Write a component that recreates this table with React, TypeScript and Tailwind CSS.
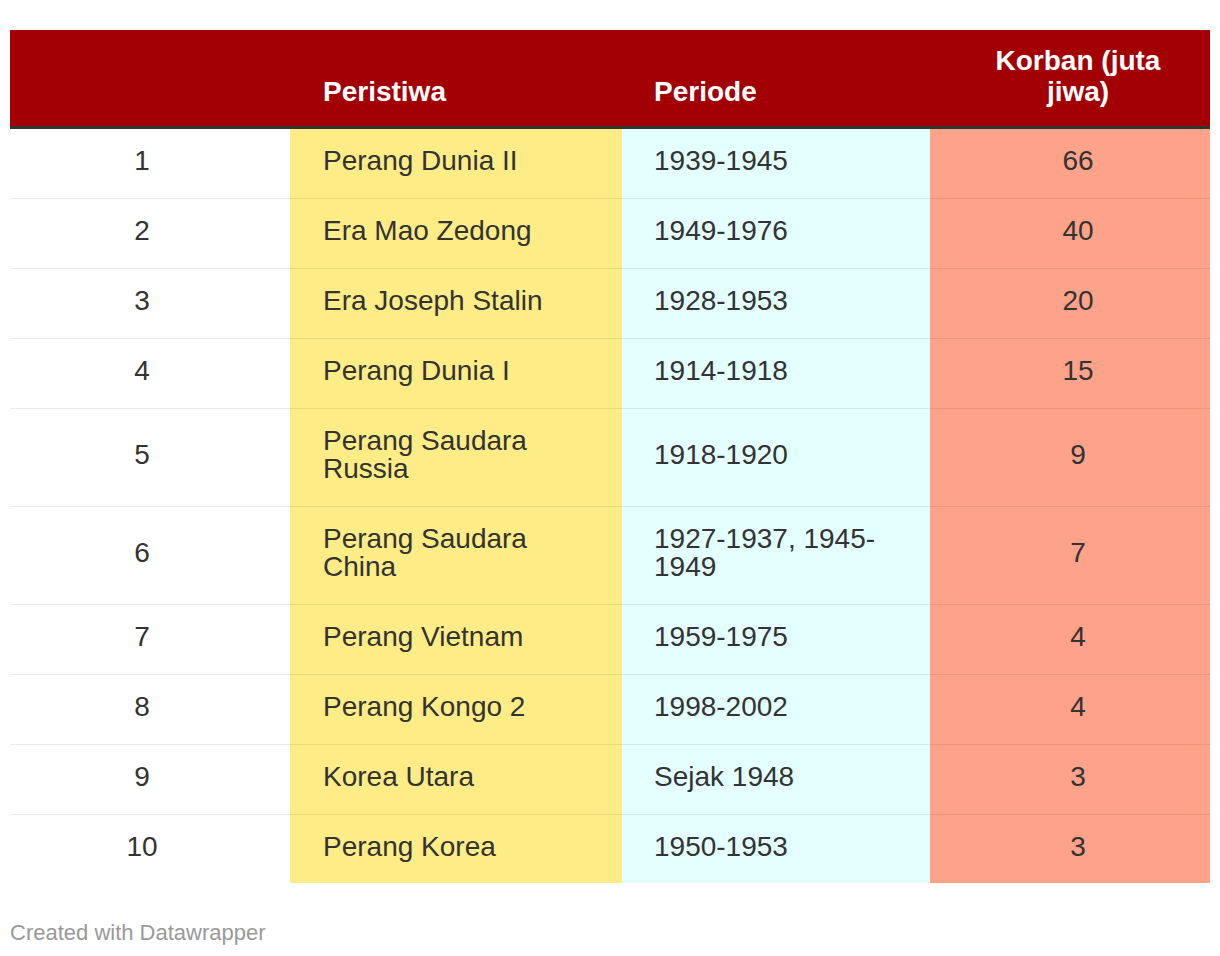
interface Row {
  no: number
  event: string[]
  period: string[]
  victims: string
}

const rows: Row[] = [
  { no: 1, event: ['Perang Dunia II'], period: ['1939-1945'], victims: '66' },
  { no: 2, event: ['Era Mao Zedong'], period: ['1949-1976'], victims: '40' },
  { no: 3, event: ['Era Joseph Stalin'], period: ['1928-1953'], victims: '20' },
  { no: 4, event: ['Perang Dunia I'], period: ['1914-1918'], victims: '15' },
  { no: 5, event: ['Perang Saudara', 'Russia'], period: ['1918-1920'], victims: '9' },
  { no: 6, event: ['Perang Saudara', 'China'], period: ['1927-1937, 1945-', '1949'], victims: '7' },
  { no: 7, event: ['Perang Vietnam'], period: ['1959-1975'], victims: '4' },
  { no: 8, event: ['Perang Kongo 2'], period: ['1998-2002'], victims: '4' },
  { no: 9, event: ['Korea Utara'], period: ['Sejak 1948'], victims: '3' },
  { no: 10, event: ['Perang Korea'], period: ['1950-1953'], victims: '3' },
]

function Lines({ lines }: { lines: string[] }) {
  return (
    <>
      {lines.map((l, i) => (
        <span key={i} className="block">
          {l}
        </span>
      ))}
    </>
  )
}

export default function App() {
  return (
    <div
      className="bg-white min-h-[956px] px-[10px] pt-[30px]"
      style={{ fontFamily: '"Liberation Sans", Arial, sans-serif' }}
    >
      <table className="w-full table-fixed border-collapse text-[28px] leading-[28px] text-[#333]">
        <colgroup>
          <col className="w-[280px]" />
          <col className="w-[332px]" />
          <col className="w-[308px]" />
          <col className="w-[280px]" />
        </colgroup>
        <thead>
          <tr className="bg-[#a30005] text-white font-bold border-b-[3px] border-[#333]">
            <th className="pt-[15px] pb-[19px] pl-4 pr-8 align-bottom"></th>
            <th className="pt-[15px] pb-[19px] pl-[33px] pr-8 text-left align-bottom leading-[31px]">
              Peristiwa
            </th>
            <th className="pt-[15px] pb-[19px] pl-8 pr-8 text-left align-bottom leading-[31px]">
              Periode
            </th>
            <th className="pt-[15px] pb-[19px] pl-8 pr-4 text-center align-bottom leading-[31px]">
              <span className="block">Korban (juta</span>
              <span className="block">jiwa)</span>
            </th>
          </tr>
        </thead>
        <tbody>
          {rows.map((r, i) => {
            const last = i === rows.length - 1
            const cell = last ? 'pt-[18px] pb-[22px]' : 'pt-[18px] pb-[23px] border-b border-black/[0.08]'
            return (
              <tr key={r.no}>
                <td className={`${cell} pl-4 pr-8 text-center bg-white`}>{r.no}</td>
                <td className={`${cell} pl-[33px] pr-8 text-left bg-[#feed86]`}>
                  <Lines lines={r.event} />
                </td>
                <td className={`${cell} pl-8 pr-8 text-left bg-[#e3ffff]`}>
                  <Lines lines={r.period} />
                </td>
                <td className={`${cell} pl-8 pr-4 text-center bg-[#fea28a]`}>{r.victims}</td>
              </tr>
            )
          })}
        </tbody>
      </table>
      <p className="mt-[37px] text-[22px] leading-[26px] text-[#999]">Created with Datawrapper</p>
    </div>
  )
}
